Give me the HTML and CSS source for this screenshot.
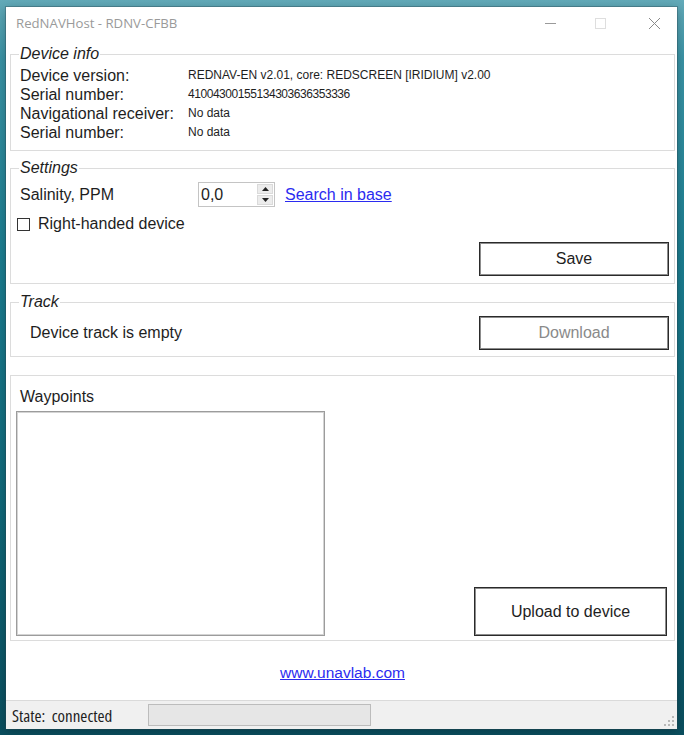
FILE: index.html
```html
<!DOCTYPE html>
<html>
<head>
<meta charset="utf-8">
<link rel="stylesheet" href="styles.css">
</head>
<body>
<div class="desktop">
  <div class="window">
    <div class="titlebar">
      <span class="title">RedNAVHost - RDNV-CFBB</span>
      <div class="controls">
        <svg class="ctl" width="46" height="30" viewBox="0 0 46 30"><line x1="18" y1="15.5" x2="29" y2="15.5" stroke="#9a9a9a" stroke-width="1"/></svg>
        <svg class="ctl" width="46" height="30" viewBox="0 0 46 30"><rect x="16.5" y="10.5" width="10" height="10" fill="none" stroke="#dedede" stroke-width="1"/></svg>
        <svg class="ctl" width="46" height="30" viewBox="0 0 46 30"><path d="M18 10 L29 21 M29 10 L18 21" stroke="#8a8a8a" stroke-width="1" fill="none"/></svg>
      </div>
    </div>
    <div class="client">
      <fieldset class="group info">
        <legend>Device info</legend>
        <div class="info-grid">
          <span class="lbl">Device version:</span><span class="val">REDNAV-EN v2.01, core: REDSCREEN [IRIDIUM] v2.00</span>
          <span class="lbl">Serial number:</span><span class="val serial">41004300155134303636353336</span>
          <span class="lbl">Navigational receiver:</span><span class="val">No data</span>
          <span class="lbl">Serial number:</span><span class="val">No data</span>
        </div>
      </fieldset>

      <fieldset class="group settings">
        <legend>Settings</legend>
        <div class="sal-row">
          <span class="sal-lbl">Salinity, PPM</span>
          <div class="numeric">
            <span class="num-val">0,0</span>
            <div class="spin">
              <span class="spin-btn"><svg width="7" height="4" viewBox="0 0 7 4"><path d="M0 4 L3.5 0 L7 4 Z" fill="#222"/></svg></span>
              <span class="spin-btn"><svg width="7" height="4" viewBox="0 0 7 4"><path d="M0 0 L3.5 4 L7 0 Z" fill="#222"/></svg></span>
            </div>
          </div>
          <a class="link" href="#">Search in base</a>
        </div>
        <label class="check-row"><span class="checkbox"></span><span>Right-handed device</span></label>
        <div class="btn-row"><button class="btn">Save</button></div>
      </fieldset>

      <fieldset class="group track">
        <legend>Track</legend>
        <div class="track-row">
          <span class="track-text">Device track is empty</span>
          <button class="btn disabled">Download</button>
        </div>
      </fieldset>

      <div class="group waypoints">
        <div class="wp-title">Waypoints</div>
        <div class="wp-body">
          <div class="listbox"></div>
          <button class="btn upload">Upload to device</button>
        </div>
      </div>

      <div class="site"><a class="link site-link" href="#">www.unavlab.com</a></div>
    </div>
    <div class="statusbar">
      <span class="state">State:&nbsp; connected</span>
      <div class="progress"></div>
      <svg class="grip" width="12" height="12" viewBox="0 0 12 12">
        <rect x="9" y="1" width="2" height="2" fill="#b8b8b8"/>
        <rect x="5" y="5" width="2" height="2" fill="#b8b8b8"/>
        <rect x="9" y="5" width="2" height="2" fill="#b8b8b8"/>
        <rect x="1" y="9" width="2" height="2" fill="#b8b8b8"/>
        <rect x="5" y="9" width="2" height="2" fill="#b8b8b8"/>
        <rect x="9" y="9" width="2" height="2" fill="#b8b8b8"/>
      </svg>
    </div>
  </div>
</div>
</body>
</html>
```
FILE: styles.css
```css
html, body {
  margin: 0;
  padding: 0;
}
body {
  width: 684px;
  height: 735px;
  overflow: hidden;
  font-family: "Liberation Sans", Arial, sans-serif;
  color: #1e1e1e;
}
.desktop {
  box-sizing: border-box;
  width: 684px;
  height: 735px;
  padding: 7px 7px 6px 6px;
  background: linear-gradient(180deg, #63aab9 0%, #3a93a5 8%, #1b7d90 35%, #0f6778 70%, #0a4e5e 100%);
}
.window {
  width: 671px;
  height: 722px;
  background: #fff;
  display: flex;
  flex-direction: column;
  box-shadow: 0 0 0 1px rgba(40, 70, 80, 0.35), 0 2px 10px rgba(0, 0, 0, 0.25);
}
.titlebar {
  height: 31px;
  display: flex;
  align-items: center;
  justify-content: space-between;
  flex: none;
}
.title {
  margin-left: 10px;
  font-family: "Open Sans", "Noto Sans", sans-serif;
  font-size: 13.2px;
  font-weight: 400;
  color: #9a9a9a;
}
.controls {
  display: flex;
  align-items: center;
  margin-right: 0;
  margin-top: 1px;
}
.ctl {
  display: block;
  margin-left: 6px;
}
.client {
  flex: 1;
  display: flex;
  flex-direction: column;
  padding: 7px 2px 0 4px;
}
.group {
  margin: 0;
  border: 1px solid #dcdcdc;
  min-width: 0;
}
fieldset.group {
  padding: 3px 5px 6px 9px;
}
.group legend {
  font-style: italic;
  font-size: 16px;
  line-height: 18px;
  padding: 0 1px;
  margin-left: -1px;
  color: #1e1e1e;
}
fieldset.info {
  padding-bottom: 8px;
}
.info-grid {
  display: grid;
  grid-template-columns: 168px 1fr;
  grid-auto-rows: 19px;
  align-items: center;
}
.lbl {
  font-size: 16px;
  line-height: 19px;
}
.val {
  font-size: 12px;
  line-height: 19px;
}
.val.serial {
  letter-spacing: -0.45px;
}
.settings {
  margin-top: 8px;
}
fieldset.settings {
  padding-top: 5px;
  padding-bottom: 7px;
}
.sal-row {
  display: flex;
  align-items: center;
  height: 25px;
}
.sal-lbl {
  width: 178px;
  font-size: 16px;
}
.numeric {
  box-sizing: border-box;
  width: 77px;
  height: 25px;
  border: 1px solid #c4c4c4;
  display: flex;
  align-items: stretch;
  background: #fff;
}
.num-val {
  flex: 1;
  font-size: 16px;
  line-height: 23px;
  padding-left: 2px;
}
.spin {
  width: 16px;
  display: flex;
  flex-direction: column;
  padding: 1px 1px 1px 0;
  gap: 1px;
}
.spin-btn {
  flex: 1;
  background: #ececec;
  border: 1px solid #dadada;
  display: flex;
  align-items: center;
  justify-content: center;
}
.spin-btn svg {
  display: block;
}
.link {
  color: #2b2bf0;
  text-decoration: underline;
  font-size: 16px;
  margin-left: 10px;
}
.check-row {
  display: flex;
  align-items: center;
  height: 18px;
  margin-top: 8px;
  margin-left: -3px;
  font-size: 16px;
}
.checkbox {
  box-sizing: border-box;
  width: 13px;
  height: 13px;
  border: 1px solid #333;
  background: #fff;
  margin-right: 8px;
}
.btn-row {
  display: flex;
  justify-content: flex-end;
  margin-top: 9px;
}
.btn {
  box-sizing: border-box;
  width: 190px;
  height: 34px;
  border: 1px solid #2a2a2a;
  box-shadow: inset 0 0 0 1px #8c8c8c;
  background: #fff;
  font-family: "Liberation Sans", Arial, sans-serif;
  font-size: 16px;
  color: #1e1e1e;
  padding: 0;
}
.btn.disabled {
  color: #8a8a8a;
}
.track {
  margin-top: 9px;
}
fieldset.track {
  padding-top: 5px;
  padding-bottom: 6px;
}
.track-row {
  display: flex;
  align-items: center;
  justify-content: space-between;
}
.track-text {
  font-size: 16px;
  margin-left: 10px;
}
.waypoints {
  margin-top: 18px;
  padding: 12px 7px 4px 5px;
  display: flex;
  flex-direction: column;
}
.wp-title {
  font-size: 16px;
  line-height: 18px;
  margin-left: 4px;
}
.wp-body {
  margin-top: 5px;
  display: flex;
  justify-content: space-between;
  align-items: flex-end;
}
.listbox {
  box-sizing: border-box;
  width: 309px;
  height: 225px;
  border: 1px solid #9c9c9c;
  box-shadow: inset 0 0 0 1px #d4d4d4;
  background: #fff;
}
.btn.upload {
  width: 193px;
  height: 49px;
}
.site {
  flex: 1;
  display: flex;
  align-items: center;
  justify-content: center;
  padding-top: 5px;
}
.site-link {
  margin-left: 0;
  font-size: 15.5px;
}
.statusbar {
  flex: none;
  height: 29px;
  box-sizing: border-box;
  border-top: 1px solid #dadada;
  background: #f0f0f0;
  display: flex;
  align-items: center;
  position: relative;
}
.state {
  margin-left: 6px;
  font-family: "Open Sans", "Noto Sans", sans-serif;
  font-size: 17px;
  font-stretch: 75%;
  color: #1e1e1e;
  width: 136px;
}
.progress {
  box-sizing: border-box;
  width: 223px;
  height: 22px;
  background: #e6e6e6;
  border: 1px solid #bcbcbc;
}
.grip {
  position: absolute;
  right: 2px;
  bottom: 2px;
}
```
